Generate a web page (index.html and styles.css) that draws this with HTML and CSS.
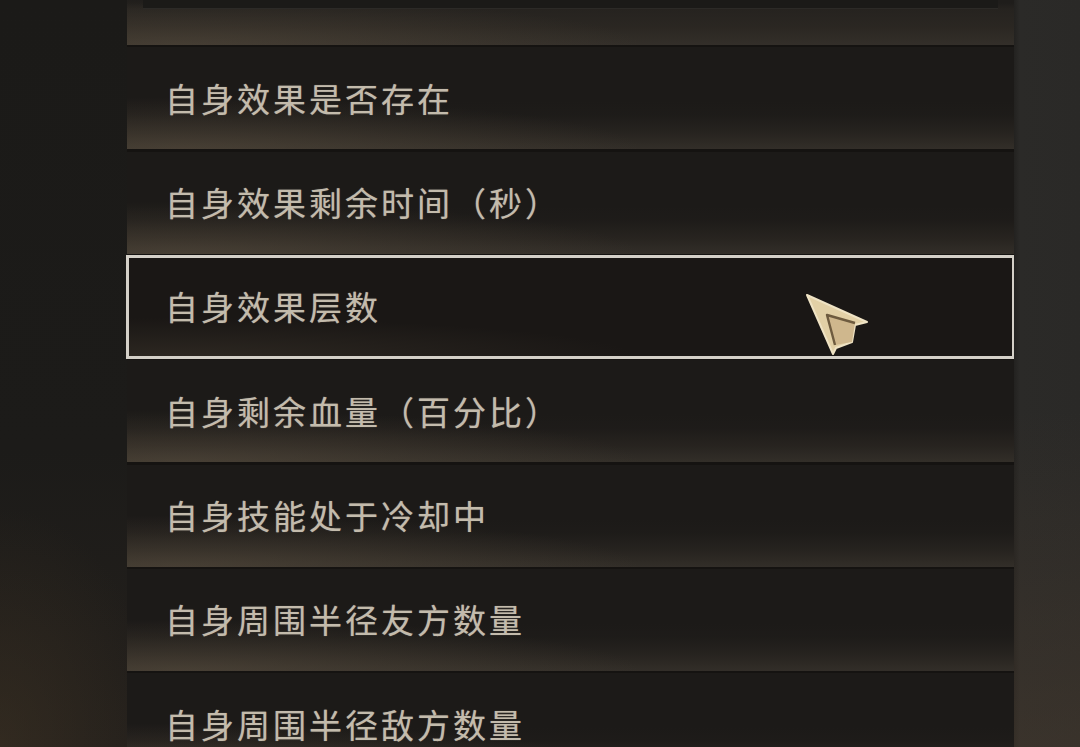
FILE: index.html
```html
<!DOCTYPE html>
<html lang="zh-CN">
<head>
<meta charset="utf-8">
<title>条件列表</title>
<link rel="stylesheet" href="styles.css">
</head>
<body>
<div class="screen">
  <div class="side-left"></div>
  <div class="panel">
    <div class="row row--cut"><div class="cut-strip"></div></div>
    <div class="row"><span class="label">自身效果是否存在</span></div>
    <div class="row"><span class="label">自身效果剩余时间（秒）</span></div>
    <div class="row row--selected"><span class="label">自身效果层数</span></div>
    <div class="row"><span class="label">自身剩余血量（百分比）</span></div>
    <div class="row"><span class="label">自身技能处于冷却中</span></div>
    <div class="row"><span class="label">自身周围半径友方数量</span></div>
    <div class="row"><span class="label">自身周围半径敌方数量</span></div>
  </div>
  <div class="side-right"></div>
</div>
<svg class="cursor" width="75" height="72" viewBox="0 0 75 72" aria-hidden="true">
  <polygon points="7,7 67,34 55,37 52,54 36,60 33,66" fill="#e2d0a6" stroke="#efe3c4" stroke-width="2" stroke-linejoin="round"/>
  <polygon points="27,27 55,35 52,54 35,57" fill="#cfb78d"/>
  <polyline points="35,57 27,27 55,35" fill="none" stroke="#6e5b3f" stroke-width="2.4" stroke-linejoin="round"/>
</svg>
</body>
</html>
```
FILE: styles.css
```css
html, body {
  margin: 0;
  padding: 0;
}
body {
  width: 1080px;
  height: 747px;
  overflow: hidden;
  position: relative;
  background: #1b1a18;
  font-family: "Noto Sans CJK SC", "Noto Sans", sans-serif;
}
.screen {
  display: flex;
  height: 747px;
}
.side-left {
  width: 127px;
  flex: none;
  background:
    radial-gradient(ellipse 160px 240px at 0% 100%, rgba(64, 52, 36, 0.5), rgba(64, 52, 36, 0) 100%),
    linear-gradient(to bottom, #1b1a18 0%, #1c1b19 60%, #24201c 100%);
}
.panel {
  width: 887px;
  flex: none;
  display: flex;
  flex-direction: column;
  gap: 2.33px;
  background: #151311;
}
.side-right {
  flex: 1;
  background:
    linear-gradient(to right, #232220 0, #2b2a28 6px, #2a2927 100%);
  position: relative;
}
.side-right::after {
  content: "";
  position: absolute;
  inset: 0;
  background: linear-gradient(to bottom, rgba(0,0,0,0) 55%, rgba(76, 62, 48, 0.45) 100%);
}
.row {
  flex: none;
  height: 102px;
  position: relative;
  display: flex;
  align-items: center;
  padding-left: 38px;
  background:
    radial-gradient(ellipse 460px 52px at 6% 100%, rgba(92, 80, 64, 0.5), rgba(92, 80, 64, 0) 100%),
    linear-gradient(to top, rgba(58, 53, 46, 0.75) 0, rgba(50, 45, 39, 0.5) 16px, rgba(40, 36, 32, 0.15) 34px, rgba(40, 36, 32, 0) 48px),
    #1c1a18;
}
.row--cut {
  height: 45px;
  align-items: flex-start;
  padding-left: 0;
  background:
    radial-gradient(ellipse 460px 48px at 6% 100%, rgba(92, 80, 64, 0.45), rgba(92, 80, 64, 0) 100%),
    linear-gradient(to top, rgba(58, 53, 46, 0.75) 0, rgba(52, 47, 40, 0.55) 18px, rgba(46, 42, 37, 0.45) 36px, rgba(30, 28, 26, 0) 42px),
    #1f1d1b;
}
.cut-strip {
  margin-left: 16px;
  width: 855px;
  height: 8px;
  background: #1b1a18;
  border-bottom: 1px solid #2c2a27;
}
.row--selected {
  outline: 3px solid #d4d0c8;
  outline-offset: -2px;
  background:
    radial-gradient(ellipse 460px 40px at 6% 100%, rgba(80, 70, 56, 0.35), rgba(80, 70, 56, 0) 100%),
    #1a1715;
}
.label {
  font-size: 33px;
  letter-spacing: 3px;
  color: #c3bbac;
  line-height: 1;
  white-space: nowrap;
  text-shadow: 0 0 1px rgba(195, 187, 172, 0.6);
}
.cursor {
  position: absolute;
  left: 800px;
  top: 288px;
}
```
